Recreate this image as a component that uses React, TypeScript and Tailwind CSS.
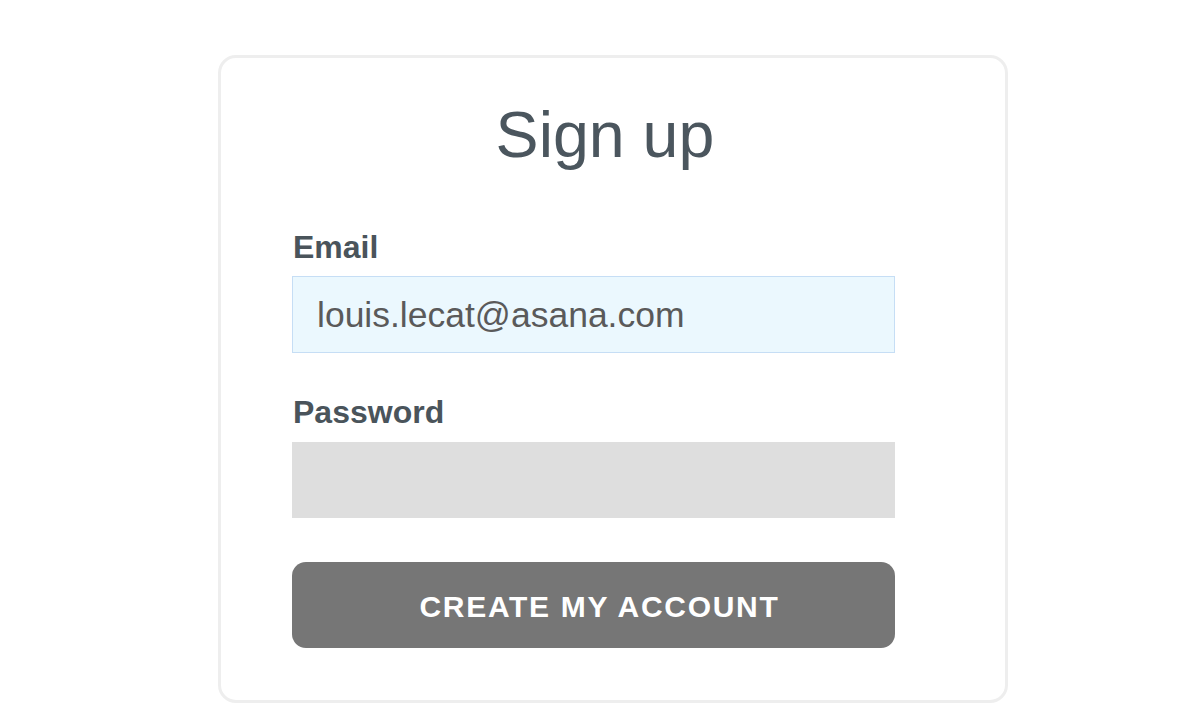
export default function App() {
  return (
    <div
      className="min-h-screen w-full bg-white pt-[55px]"
      style={{ fontFamily: '"Liberation Sans", Arial, sans-serif' }}
    >
      {/* Card */}
      <div className="ml-[218px] w-[790px] h-[648px] rounded-[18px] border-[3px] border-[#eeeeee] bg-white pt-[45px] pl-[71px]">
        <h1 className="w-[626px] text-center text-[64.5px] leading-[64px] text-[#4b565e]">Sign up</h1>

        <form className="w-[603px]" onSubmit={(e) => e.preventDefault()}>
          <label className="mt-[64px] block pl-[1px] text-[32px] leading-[32px] font-bold text-[#4a545b]">Email</label>
          <div className="mt-[13px] flex h-[77px] items-center border border-[#c6def5] bg-[#ebf8fe] pl-[24px] pt-[2px]">
            <span className="text-[35.5px] text-[#5a5a5a]">louis.lecat@asana.com</span>
          </div>

          <label className="mt-[43px] block pl-[1px] text-[32px] leading-[32px] font-bold text-[#4a545b]">Password</label>
          <div className="mt-[14px] h-[76px] bg-[#dedede]" />

          <button
            type="submit"
            className="mt-[44px] flex h-[86px] w-full items-center justify-center rounded-[14px] bg-[#767676] pl-[12px] pt-[3px] text-[30px] font-bold tracking-[1.7px] text-white"
          >
            CREATE MY ACCOUNT
          </button>
        </form>
      </div>
    </div>
  );
}
